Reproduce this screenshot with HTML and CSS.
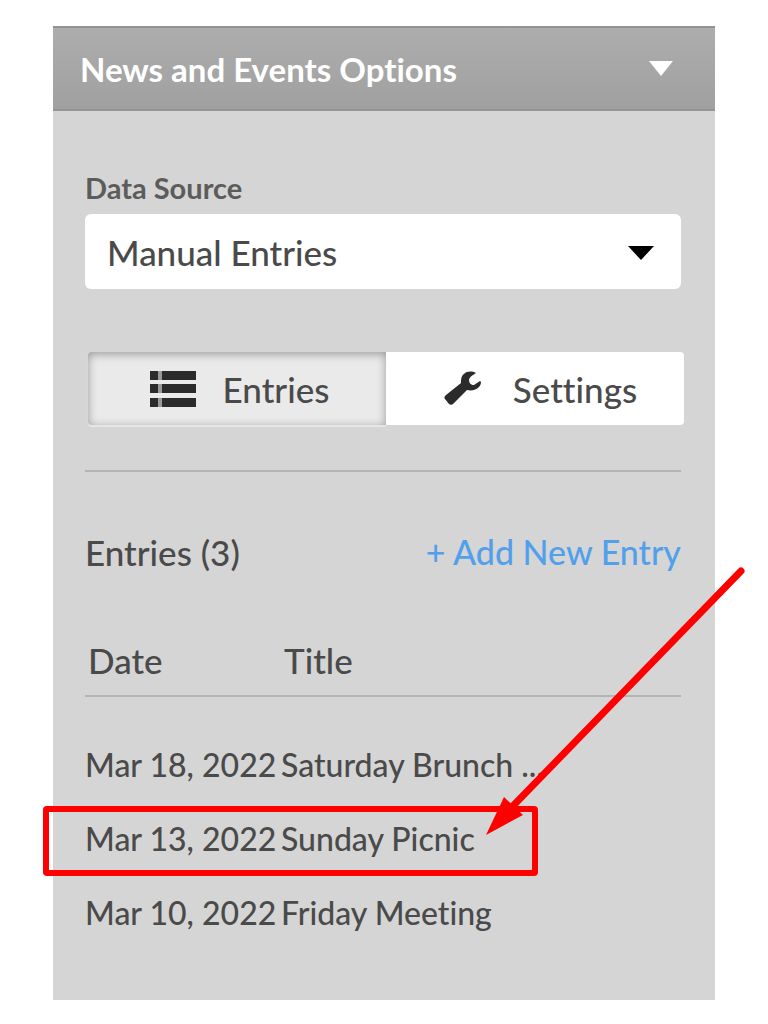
FILE: index.html
```
<!DOCTYPE html>
<html lang="en">
<head>
    <meta charset="UTF-8">
    <meta name="viewport" content="width=device-width, initial-scale=1.0">
    <title>News and Events Options</title>
    <link rel="stylesheet" href="styles.css">
</head>
<body>
    <div class="panel">
        <button type="button" class="panel-header">
            <span>News and Events Options</span>
            <svg class="header-caret" viewBox="0 0 24 15" aria-hidden="true"><path d="M0 0h24L12 15z" fill="#fff"/></svg>
        </button>

        <div class="panel-body">
            <label class="field-label" for="dataSource">Data Source</label>
            <div class="select-wrap">
                <select id="dataSource">
                    <option>Manual Entries</option>
                </select>
                <svg class="select-caret" viewBox="0 0 26 14" aria-hidden="true"><path d="M0 0h26L13 14z" fill="#000"/></svg>
            </div>

            <div class="tabs">
                <button type="button" class="tab active">
                    <svg width="48" height="36" viewBox="0 0 48 36" fill="#2b2b2b" aria-hidden="true">
                        <path d="M1 0h8v9H1zM13 0h34v9H13zM1 13h8v9H1zM13 13h34v9H13zM1 27h8v9H1zM13 27h34v9H13z"/>
                        <path d="M9 0h4v9H9zM9 13h4v9H9zM9 27h4v9H9z" fill="#999"/>
                    </svg>
                    Entries
                </button>
                <button type="button" class="tab">
                    <svg width="38" height="36" viewBox="0 0 38 36" fill="#2b2b2b" aria-hidden="true">
                        <path d="M33 2C29 0 24 0 21 3c-3 2-3 6-3 9L3 24c-2 2-2 3-1 4l4 5c1 1 3 1 4 0l14-14c5 1 9 0 12-3 1-1 2-3 2-5l-1-1-6 4c-3 0-5-2-5-5 0-2 2-4 4-5z"/>
                    </svg>
                    Settings
                </button>
            </div>

            <div class="entries-bar">
                <span>Entries (3)</span>
                <a href="#">+ Add New Entry</a>
            </div>

            <table class="entries">
                <thead>
                    <tr>
                        <th>Date</th>
                        <th>Title</th>
                    </tr>
                </thead>
                <tbody>
                    <tr>
                        <td>Mar 18, 2022</td>
                        <td>Saturday Brunch ...</td>
                    </tr>
                    <tr>
                        <td class="marked">
                            Mar 13, 2022
                            <span class="mark-box"></span>
                            <svg class="mark-arrow" viewBox="0 0 264 276" aria-hidden="true">
                                <path d="M257 8L24 248" stroke="#f00" stroke-width="7" stroke-linecap="round"/>
                                <path d="M2 272L20 234L39 252z" fill="#f00"/>
                            </svg>
                        </td>
                        <td>Sunday Picnic</td>
                    </tr>
                    <tr>
                        <td>Mar 10, 2022</td>
                        <td>Friday Meeting</td>
                    </tr>
                </tbody>
            </table>
        </div>
    </div>
</body>
</html>
```
FILE: styles.css
```
* {
    box-sizing: border-box;
    margin: 0;
    padding: 0;
}
body {
    background: #fff;
    color: #4a4a4a;
    font-family: Lato, sans-serif;
    font-size: 35px;
    font-weight: 500;
    font-variant-ligatures: none;
    line-height: 40px;
    padding: 26px 53px 24px;
}
button, select {
    font: inherit;
    font-variant-ligatures: none;
    color: inherit;
    border: none;
    cursor: pointer;
}
.panel {
    background: #d5d5d5;
}
.panel-header {
    display: flex;
    justify-content: space-between;
    align-items: center;
    width: 100%;
    height: 85px;
    padding: 0 42px 0 27px;
    background: linear-gradient(#adadad, #a0a0a0);
    border-top: 2px solid #939393;
    border-bottom: 2px solid #959595;
    color: #fff;
    font-size: 33px;
    font-weight: 700;
}
.header-caret {
    width: 24px;
    height: 15px;
}
.panel-body {
    padding: 59px 34px 50px 32px;
}
.field-label {
    display: block;
    margin-bottom: 8px;
    color: #5c5c5c;
    font-size: 29px;
    font-weight: 700;
    line-height: 36px;
}
.select-wrap {
    position: relative;
}
select {
    display: block;
    width: 100%;
    height: 75px;
    padding: 0 22px;
    background: #fff;
    border-radius: 6px;
    appearance: none;
}
.select-caret {
    position: absolute;
    top: 32px;
    right: 27px;
    width: 26px;
    height: 14px;
    pointer-events: none;
}
.tabs {
    display: grid;
    grid-template-columns: 1fr 1fr;
    margin: 63px -3px 0 3px;
}
.tab {
    display: flex;
    justify-content: center;
    align-items: center;
    gap: 32px;
    height: 73px;
    padding-left: 10px;
    background: #fff;
    border-radius: 0 4px 4px 0;
}
.tab.active {
    gap: 26px;
    padding-left: 4px;
    background: #eaeaea;
    border-radius: 4px 0 0 4px;
    box-shadow: inset 0 2px 10px rgba(0, 0, 0, 0.35), 0 2px 1px #e6e6e6;
}
.entries-bar {
    display: flex;
    justify-content: space-between;
    margin-top: 45px;
    padding-top: 60px;
    border-top: 2px solid #b4b4b4;
}
.entries-bar a {
    color: #52a0ec;
    font-size: 34px;
    text-decoration: none;
}
.entries {
    width: 100%;
    margin-top: 68px;
    border-collapse: collapse;
    text-align: left;
}
.entries th {
    padding: 0 3px 15px;
    border-bottom: 2px solid #b4b4b4;
    font-weight: 500;
}
.entries th:first-child {
    width: 196px;
}
.entries td {
    height: 74px;
    font-size: 32px;
    white-space: nowrap;
}
.entries tbody::before {
    content: "";
    display: block;
    height: 31px;
}
/* red callout around the second entry */
.marked {
    position: relative;
}
.mark-box {
    position: absolute;
    top: 4px;
    left: -42px;
    width: 495px;
    height: 70px;
    border: 6px solid #f00;
    border-radius: 4px;
}
.mark-arrow {
    position: absolute;
    bottom: 37px;
    left: 399px;
    width: 264px;
    height: 276px;
    fill: none;
}
```
